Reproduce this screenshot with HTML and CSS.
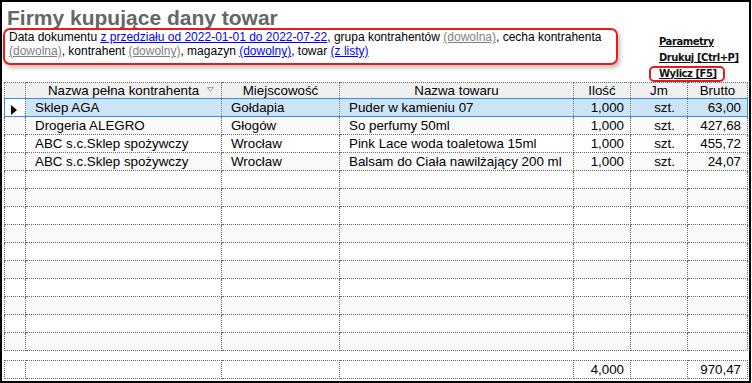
FILE: index.html
```html
<!DOCTYPE html>
<html lang="pl">
<head>
    <meta charset="UTF-8">
    <title>Firmy kupujące dany towar</title>
    <link rel="stylesheet" href="styles.css">
</head>
<body>
    <div class="window">
        <div class="top">
            <div class="intro">
                <h1 class="title">Firmy kupujące dany towar</h1>
                <div class="filters">
                    Data dokumentu <a href="#">z przedziału od 2022-01-01 do 2022-07-22</a>, grupa kontrahentów <a href="#" class="any">(dowolna)</a>, cecha kontrahenta <a href="#" class="any">(dowolna)</a>, kontrahent <a href="#" class="any">(dowolny)</a>, magazyn <a href="#">(dowolny)</a>, towar <a href="#">(z listy)</a>
                </div>
            </div>
            <div class="actions">
                <a href="#">Parametry</a>
                <a href="#">Drukuj [Ctrl+P]</a>
                <a href="#" class="boxed">Wylicz [F5]</a>
            </div>
        </div>

        <table class="grid">
            <colgroup>
                <col class="c-ind"><col class="c-name"><col class="c-city"><col class="c-item"><col class="c-qty"><col class="c-unit"><col class="c-gross">
            </colgroup>
            <thead>
                <tr>
                    <th></th>
                    <th class="sortable">Nazwa pełna kontrahenta
                        <svg class="sort" width="7" height="5" viewBox="0 0 7 5"><polygon points="0.5,0.5 6.5,0.5 3.5,4.5" fill="none" stroke="#a0a0a0" stroke-width="1"/></svg>
                    </th>
                    <th>Miejscowość</th>
                    <th>Nazwa towaru</th>
                    <th>Ilość</th>
                    <th>Jm</th>
                    <th>Brutto</th>
                </tr>
            </thead>
            <tbody>
                <tr class="selected">
                    <td class="ind"><svg width="6" height="10" viewBox="0 0 6 10"><polygon points="0,0 6,5 0,10" fill="#000"/></svg></td>
                    <td>Sklep AGA</td><td>Gołdapia</td><td>Puder w kamieniu 07</td>
                    <td class="num">1,000</td><td class="unit">szt.</td><td class="num">63,00</td>
                </tr>
                <tr>
                    <td class="ind">&nbsp;</td>
                    <td>Drogeria ALEGRO</td><td>Głogów</td><td>So perfumy 50ml</td>
                    <td class="num">1,000</td><td class="unit">szt.</td><td class="num">427,68</td>
                </tr>
                <tr>
                    <td class="ind">&nbsp;</td>
                    <td>ABC s.c.Sklep spożywczy</td><td>Wrocław</td><td>Pink Lace woda toaletowa 15ml</td>
                    <td class="num">1,000</td><td class="unit">szt.</td><td class="num">455,72</td>
                </tr>
                <tr>
                    <td class="ind">&nbsp;</td>
                    <td>ABC s.c.Sklep spożywczy</td><td>Wrocław</td><td>Balsam do Ciała nawilżający 200 ml</td>
                    <td class="num">1,000</td><td class="unit">szt.</td><td class="num">24,07</td>
                </tr>
                <tr><td>&nbsp;</td><td></td><td></td><td></td><td></td><td></td><td></td></tr>
                <tr><td>&nbsp;</td><td></td><td></td><td></td><td></td><td></td><td></td></tr>
                <tr><td>&nbsp;</td><td></td><td></td><td></td><td></td><td></td><td></td></tr>
                <tr><td>&nbsp;</td><td></td><td></td><td></td><td></td><td></td><td></td></tr>
                <tr><td>&nbsp;</td><td></td><td></td><td></td><td></td><td></td><td></td></tr>
                <tr><td>&nbsp;</td><td></td><td></td><td></td><td></td><td></td><td></td></tr>
                <tr><td>&nbsp;</td><td></td><td></td><td></td><td></td><td></td><td></td></tr>
                <tr><td>&nbsp;</td><td></td><td></td><td></td><td></td><td></td><td></td></tr>
                <tr><td>&nbsp;</td><td></td><td></td><td></td><td></td><td></td><td></td></tr>
                <tr><td>&nbsp;</td><td></td><td></td><td></td><td></td><td></td><td></td></tr>
            </tbody>
        </table>

        <table class="grid totals">
            <colgroup>
                <col class="c-ind"><col class="c-name"><col class="c-city"><col class="c-item"><col class="c-qty"><col class="c-unit"><col class="c-gross">
            </colgroup>
            <tr>
                <td>&nbsp;</td><td></td><td></td><td></td>
                <td class="num">4,000</td><td></td><td class="num">970,47</td>
            </tr>
        </table>
    </div>
</body>
</html>
```

FILE: styles.css
```css
* {
    box-sizing: border-box;
}

body {
    margin: 0;
    background: #fff;
    color: #000;
    font-family: "Liberation Sans", Arial, sans-serif;
}

.window {
    width: 751px;
    height: 383px;
    border: 2px solid #000;
    background: #fff;
    overflow: hidden;
}

/* Header: title, filters, actions */
.top {
    display: flex;
    align-items: flex-start;
}

.intro {
    display: flex;
    flex-direction: column;
}

.title {
    margin: 5px 0 0 5px;
    font-size: 21px;
    line-height: 21px;
    font-weight: bold;
    color: #666;
}

.filters {
    width: 615px;
    margin-left: 1px;
    padding: 0 8px 5px 4px;
    border: 2px solid #e81a1a;
    border-radius: 7px;
    box-shadow: 2px 3px 4px rgba(0, 0, 0, 0.25);
    font-size: 12px;
    line-height: 14px;
}

.filters a {
    color: #0000ff;
}

.filters a.any {
    color: #808080;
}

.actions {
    display: flex;
    flex-direction: column;
    align-items: flex-start;
    margin-left: 41px;
    padding-top: 32px;
    font-family: "DejaVu Sans", Verdana, sans-serif;
    font-size: 10px;
    letter-spacing: -0.45px;
    font-weight: bold;
}

.actions a {
    color: #111;
    line-height: 16px;
}

.actions a.boxed {
    margin-left: -10px;
    padding: 0 6px 0 8px;
    border: 2px solid #e81a1a;
    border-radius: 5px;
    line-height: 12px;
}

/* Grid */
.grid {
    margin-left: 2px;
    width: 743px;
    border-collapse: collapse;
    table-layout: fixed;
    font-size: 13.33px;
}

.c-ind { width: 21px; }
.c-name { width: 196px; }
.c-city { width: 118px; }
.c-item { width: 234px; }
.c-qty { width: 57px; }
.c-unit { width: 57px; }
.c-gross { width: 60px; }

.grid th,
.grid td {
    border: 1px dotted #6a6a6a;
    padding: 0;
    white-space: nowrap;
    overflow: hidden;
}

.grid th {
    position: relative;
    background: #f0f0f0;
    font-weight: normal;
    line-height: 15px;
    text-align: center;
}

.grid th .sort {
    position: absolute;
    right: 7px;
    top: 4px;
}

.grid td {
    line-height: 17px;
    padding-left: 9px;
}

.grid tbody tr:nth-child(even) td {
    background: #fafafa;
}

.grid td.ind {
    padding-left: 6px;
}

.grid td.num {
    text-align: right;
    padding: 0 6px 0 0;
}

.grid td.unit {
    text-align: center;
    padding-left: 11px;
}

.grid tr.selected td {
    background: #cce4f7;
    border-top: 1px solid #3a8ee6;
    border-bottom: 1px solid #3a8ee6;
}

.grid tr.selected td.ind {
    background: #fff;
    border-left: 1px solid #3a8ee6;
}

.grid tr.selected td:last-child {
    border-right: 1px solid #3a8ee6;
}

.grid td.ind svg {
    display: block;
    margin-top: 4px;
}

.totals {
    margin-top: 9px;
}
```
